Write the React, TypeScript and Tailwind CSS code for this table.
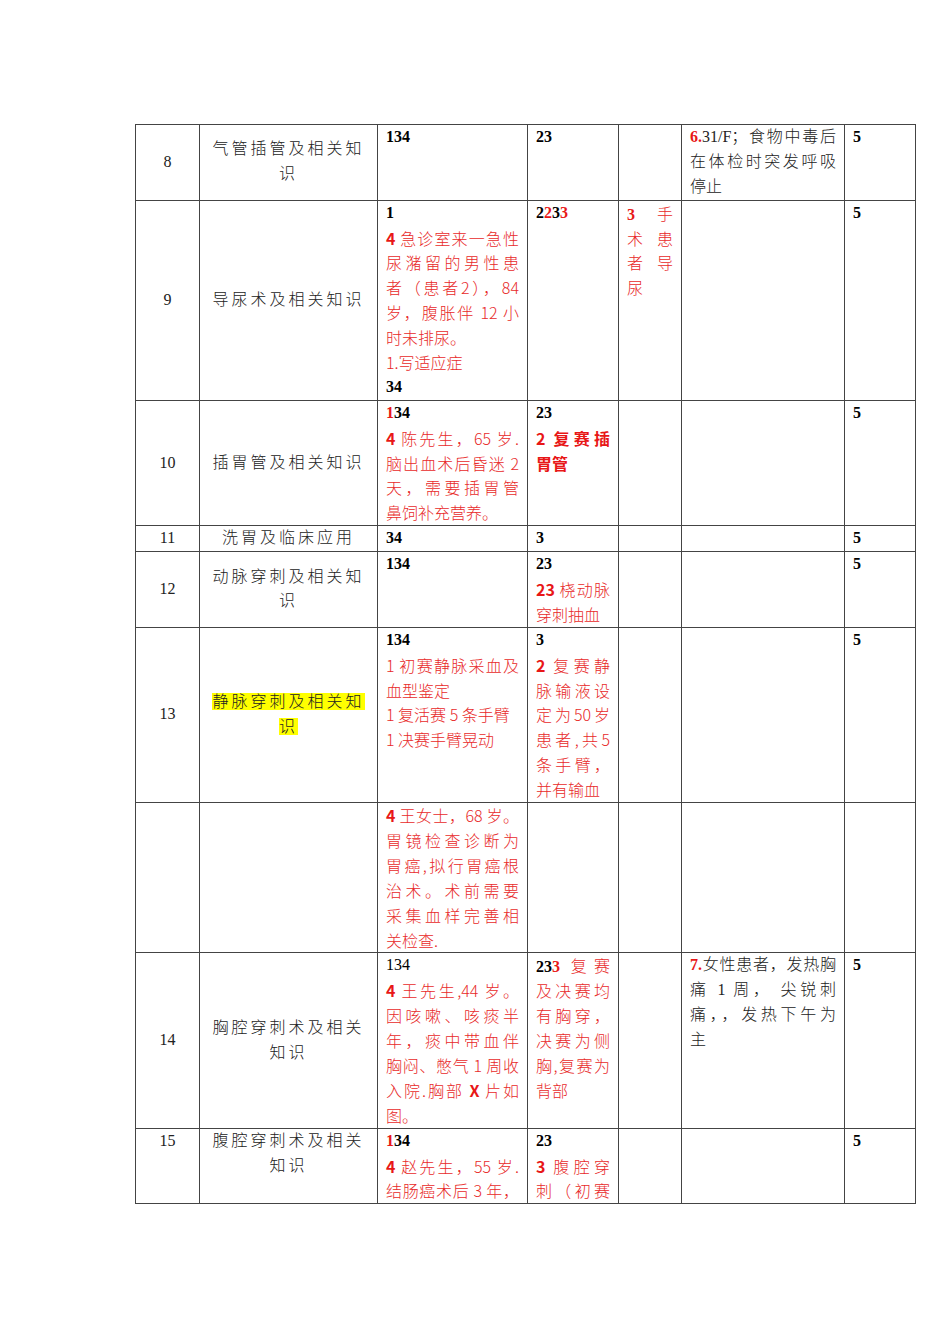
import React from "react";

// 一行：j=true 时两端对齐（末行不对齐）
const Ln = ({ children, j = false, className = "" }: { children?: React.ReactNode; j?: boolean; className?: string }) => (
  <div
    className={
      j
        ? `h-[24.9px] overflow-visible whitespace-nowrap text-justify [text-align-last:justify] ${className}`
        : `h-[24.9px] overflow-visible whitespace-nowrap ${className}`
    }
  >
    {children}
  </div>
);

// 黑色粗体数字
const N = ({ children }: { children: React.ReactNode }) => <span className="font-bold text-black">{children}</span>;
// 红色粗体（衬线）
const Rn = ({ children }: { children: React.ReactNode }) => <span className="font-bold text-[#e81717]">{children}</span>;
// 红色粗体（无衬线）
const Rs = ({ children }: { children: React.ReactNode }) => (
  <span className="font-['Noto_Sans_CJK_SC',sans-serif] font-bold text-[#e81717]">{children}</span>
);
// 红色正文
const R = ({ children, bold = false }: { children: React.ReactNode; bold?: boolean }) => (
  <span
    className={
      bold
        ? "font-['Noto_Sans_CJK_SC',sans-serif] font-bold text-[#e81717]"
        : "font-['Noto_Sans_CJK_SC',sans-serif] font-light text-[#e82a2a]"
    }
  >
    {children}
  </span>
);

const td = "border border-[#444] px-[8px] py-0 align-top";
const tdNo = "border border-[#444] px-[4px] py-0 align-middle text-center";
const tdNoTop = "border border-[#444] px-[4px] py-0 align-top text-center";
const tdName = "border border-[#444] px-[8px] py-0 align-middle text-center tracking-[3px] font-light";
const tdNameTop = "border border-[#444] px-[8px] py-0 align-top text-center tracking-[3px] font-light";

const Row = ({
  no,
  name,
  c3,
  c4,
  c5,
  c6,
  c7,
  top = false,
}: {
  no?: string;
  name?: React.ReactNode;
  c3?: React.ReactNode;
  c4?: React.ReactNode;
  c5?: React.ReactNode;
  c6?: React.ReactNode;
  c7?: React.ReactNode;
  top?: boolean;
}) => (
  <tr>
    <td className={top ? tdNoTop : tdNo}>{no && <Ln>{no}</Ln>}</td>
    <td className={top ? tdNameTop : tdName}>{name}</td>
    <td className={td}>{c3}</td>
    <td className={td}>{c4}</td>
    <td className={td}>{c5}</td>
    <td className={`${td} font-light`}>{c6}</td>
    <td className={td}>{c7}</td>
  </tr>
);

const Five = () => (
  <Ln>
    <N>5</N>
  </Ln>
);

export default function App() {
  return (
    <div className="min-h-screen bg-white pt-[124px] pl-[135px]">
      <table className="w-[780px] table-fixed border-collapse font-['Liberation_Serif','Noto_Sans_CJK_SC',serif] text-[16px] leading-[24.9px] text-[#222]">
        <colgroup>
          <col className="w-[64px]" />
          <col className="w-[178px]" />
          <col className="w-[150px]" />
          <col className="w-[91px]" />
          <col className="w-[63px]" />
          <col className="w-[163px]" />
          <col className="w-[71px]" />
        </colgroup>
        <tbody>
          <Row
            no="8"
            name={
              <>
                <Ln>气管插管及相关知</Ln>
                <Ln>识</Ln>
              </>
            }
            c3={<Ln><N>134</N></Ln>}
            c4={<Ln><N>23</N></Ln>}
            c6={
              <>
                <Ln j>
                  <Rn>6.</Rn>31/F；食物中毒后
                </Ln>
                <Ln j>在体检时突发呼吸</Ln>
                <Ln>停止</Ln>
              </>
            }
            c7={<Five />}
          />
          <Row
            no="9"
            name={<Ln>导尿术及相关知识</Ln>}
            c3={
              <>
                <Ln><N>1</N></Ln>
                <Ln j><Rs>4</Rs><R> 急诊室来一急性</R></Ln>
                <Ln j><R>尿潴留的男性患</R></Ln>
                <Ln j><R>者（患者2），84</R></Ln>
                <Ln j><R>岁，腹胀伴 12 小</R></Ln>
                <Ln><R>时未排尿。</R></Ln>
                <Ln><R>1.写适应症</R></Ln>
                <Ln><N>34</N></Ln>
              </>
            }
            c4={
              <Ln>
                <N>2</N>
                <Rn>2</Rn>
                <N>3</N>
                <Rn>3</Rn>
              </Ln>
            }
            c5={
              <>
                <Ln j><Rn>3</Rn><R> 手</R></Ln>
                <Ln j><R>术 患</R></Ln>
                <Ln j><R>者 导</R></Ln>
                <Ln><R>尿</R></Ln>
              </>
            }
            c7={<Five />}
          />
          <Row
            no="10"
            name={<Ln>插胃管及相关知识</Ln>}
            c3={
              <>
                <Ln><Rn>1</Rn><N>34</N></Ln>
                <Ln j><Rs>4</Rs><R> 陈先生，65 岁.</R></Ln>
                <Ln j><R>脑出血术后昏迷 2</R></Ln>
                <Ln j><R>天，需要插胃管</R></Ln>
                <Ln><R>鼻饲补充营养。</R></Ln>
              </>
            }
            c4={
              <>
                <Ln><N>23</N></Ln>
                <Ln j><Rs>2</Rs><R bold> 复赛插</R></Ln>
                <Ln><R bold>胃管</R></Ln>
              </>
            }
            c7={<Five />}
          />
          <Row
            no="11"
            name={<Ln>洗胃及临床应用</Ln>}
            c3={<Ln><N>34</N></Ln>}
            c4={<Ln><N>3</N></Ln>}
            c7={<Five />}
          />
          <Row
            no="12"
            name={
              <>
                <Ln>动脉穿刺及相关知</Ln>
                <Ln>识</Ln>
              </>
            }
            c3={<Ln><N>134</N></Ln>}
            c4={
              <>
                <Ln><N>23</N></Ln>
                <Ln j><Rs>23</Rs><R> 桡动脉</R></Ln>
                <Ln><R>穿刺抽血</R></Ln>
              </>
            }
            c7={<Five />}
          />
          <Row
            no="13"
            name={
              <>
                <Ln><span className="bg-[#ffff00]">静脉穿刺及相关知</span></Ln>
                <Ln><span className="bg-[#ffff00]">识</span></Ln>
              </>
            }
            c3={
              <>
                <Ln><N>134</N></Ln>
                <Ln j><R>1 初赛静脉采血及</R></Ln>
                <Ln><R>血型鉴定</R></Ln>
                <Ln><R>1 复活赛 5 条手臂</R></Ln>
                <Ln><R>1 决赛手臂晃动</R></Ln>
              </>
            }
            c4={
              <>
                <Ln><N>3</N></Ln>
                <Ln j><Rs>2</Rs><R> 复赛静</R></Ln>
                <Ln j><R>脉输液设</R></Ln>
                <Ln j><R>定为50岁</R></Ln>
                <Ln j><R>患者,共5</R></Ln>
                <Ln j><R>条手臂，</R></Ln>
                <Ln><R>并有输血</R></Ln>
              </>
            }
            c7={<Five />}
          />
          <Row
            c3={
              <>
                <Ln j><Rs>4</Rs><R> 王女士，68 岁。</R></Ln>
                <Ln j><R>胃镜检查诊断为</R></Ln>
                <Ln j><R>胃癌,拟行胃癌根</R></Ln>
                <Ln j><R>治术。术前需要</R></Ln>
                <Ln j><R>采集血样完善相</R></Ln>
                <Ln><R>关检查.</R></Ln>
              </>
            }
          />
          <Row
            no="14"
            name={
              <>
                <Ln>胸腔穿刺术及相关</Ln>
                <Ln>知识</Ln>
              </>
            }
            c3={
              <>
                <Ln><span className="text-black">134</span></Ln>
                <Ln j><Rs>4</Rs><R> 王先生,44 岁。</R></Ln>
                <Ln j><R>因咳嗽、咳痰半</R></Ln>
                <Ln j><R>年，痰中带血伴</R></Ln>
                <Ln j><R>胸闷、憋气 1 周收</R></Ln>
                <Ln j><R>入院.胸部 </R><Rs>X</Rs><R> 片如</R></Ln>
                <Ln><R>图。</R></Ln>
              </>
            }
            c4={
              <>
                <Ln j><N>23</N><Rn>3</Rn><R> 复赛</R></Ln>
                <Ln j><R>及决赛均</R></Ln>
                <Ln j><R>有胸穿，</R></Ln>
                <Ln j><R>决赛为侧</R></Ln>
                <Ln j><R>胸,复赛为</R></Ln>
                <Ln><R>背部</R></Ln>
              </>
            }
            c6={
              <>
                <Ln j><Rn>7.</Rn>女性患者，发热胸</Ln>
                <Ln j>痛 1 周， 尖锐刺</Ln>
                <Ln j>痛，，发热下午为</Ln>
                <Ln>主</Ln>
              </>
            }
            c7={<Five />}
          />
          <Row
            top
            no="15"
            name={
              <>
                <Ln>腹腔穿刺术及相关</Ln>
                <Ln>知识</Ln>
              </>
            }
            c3={
              <>
                <Ln><Rn>1</Rn><N>34</N></Ln>
                <Ln j><Rs>4</Rs><R> 赵先生，55 岁.</R></Ln>
                <Ln j><R>结肠癌术后 3 年，</R></Ln>
              </>
            }
            c4={
              <>
                <Ln><N>23</N></Ln>
                <Ln j><Rs>3</Rs><R> 腹腔穿</R></Ln>
                <Ln j><R>刺（初赛</R></Ln>
              </>
            }
            c7={<Five />}
          />
        </tbody>
      </table>
    </div>
  );
}
